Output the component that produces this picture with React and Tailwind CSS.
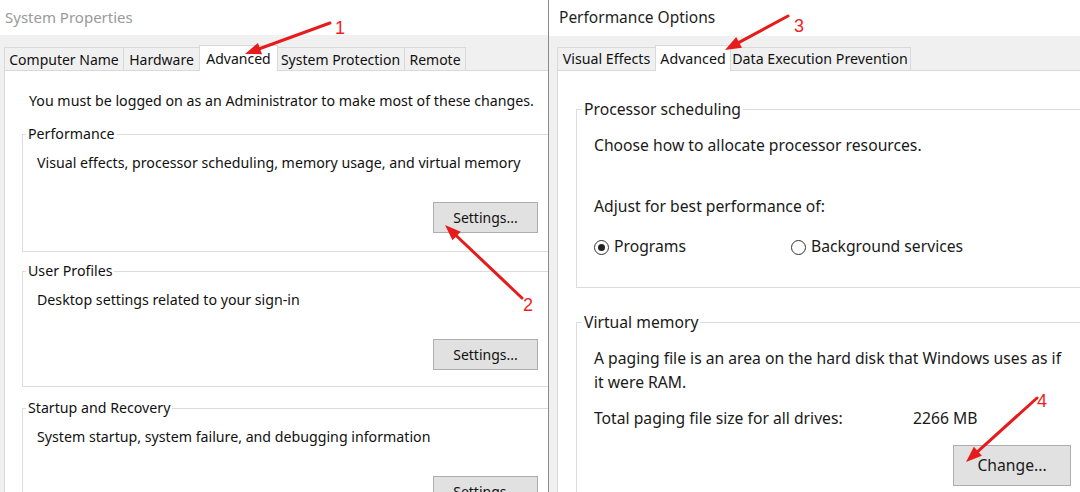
import React from "react";

const leftTabs = [
  { label: "Computer Name", w: "w-[120px]" },
  { label: "Hardware", w: "w-[77px]" },
  { label: "Advanced", w: "w-[79px]", active: true },
  { label: "System Protection", w: "w-[129px]" },
  { label: "Remote", w: "w-[62px]" },
];

const rightTabs = [
  { label: "Visual Effects", w: "w-[99px]" },
  { label: "Advanced", w: "w-[76px]", active: true },
  { label: "Data Execution Prevention", w: "w-[182px]" },
];

// red annotation arrows drawn over the screenshot
const arrows = [
  { from: [330, 23], to: [245, 54], label: "1", lx: 335, ly: 34 },
  { from: [522, 298], to: [445, 225], label: "2", lx: 523, ly: 311 },
  { from: [788, 16], to: [725, 50], label: "3", lx: 794, ly: 32 },
  { from: [1037, 398], to: [966, 462], label: "4", lx: 1037, ly: 407 },
];

function Tab({ label, w, active }) {
  if (active) {
    return (
      <div
        className={`${w} h-[26px] -ml-px -mr-px bg-white border border-b-0 border-[#d9d9d9] flex items-center justify-center relative z-10`}
      >
        {label}
      </div>
    );
  }
  return (
    <div
      className={`${w} h-[23px] mb-px -ml-px first:ml-0 bg-[#f0f0f0] border border-b-0 border-[#d9d9d9] flex items-center justify-center`}
    >
      {label}
    </div>
  );
}

function Radio({ checked, label }) {
  return (
    <div className="flex items-center gap-[5px]">
      <span className="w-[15px] h-[15px] rounded-full border border-[#333333] bg-white flex items-center justify-center">
        {checked && <span className="w-[7px] h-[7px] rounded-full bg-[#222222]" />}
      </span>
      <span>{label}</span>
    </div>
  );
}

function LeftGroup({ title, text, className }) {
  return (
    <fieldset className={`ml-[17px] w-[560px] border border-[#dcdcdc] ${className}`}>
      <legend className="ml-[3px] px-[2px] leading-[20px]">{title}</legend>
      <div className="pl-[14px] w-[515px]">
        <p className="mt-[9px] leading-[20px]">{text}</p>
        <div className="flex justify-end mt-[29px]">
          <button className="w-[105px] h-[31px] bg-[#e1e1e1] border border-[#adadad] text-[14px]">
            Settings...
          </button>
        </div>
      </div>
    </fieldset>
  );
}

function ArrowHead({ from, to }) {
  const dx = to[0] - from[0];
  const dy = to[1] - from[1];
  const len = Math.hypot(dx, dy);
  const ux = dx / len;
  const uy = dy / len;
  const bx = to[0] - ux * 16;
  const by = to[1] - uy * 16;
  const nx = -uy * 6;
  const ny = ux * 6;
  return (
    <>
      <line x1={from[0]} y1={from[1]} x2={bx} y2={by} stroke="#e61c1c" strokeWidth="3" strokeLinecap="round" />
      <polygon
        points={`${to[0]},${to[1]} ${bx + nx},${by + ny} ${bx - nx},${by - ny}`}
        fill="#e61c1c"
      />
    </>
  );
}

export default function App() {
  return (
    <div className="relative w-[1080px] h-[492px] overflow-hidden bg-white flex font-['Noto_Sans',sans-serif] text-[#111111]">
      {/* System Properties */}
      <div className="w-[548px] shrink-0 flex flex-col overflow-hidden">
        <div className="h-[35px] shrink-0 flex items-center pl-[5px] text-[15px] text-[#9a9a9a]">
          System Properties
        </div>
        <div className="flex-1 bg-[#f0f0f0] pl-[4px] pt-[10px] flex flex-col text-[14.2px]">
          <div className="flex items-end h-[26px] shrink-0 text-[14px]">
            {leftTabs.map((t) => (
              <Tab key={t.label} {...t} />
            ))}
          </div>
          <div className="flex-1 -mt-px w-[600px] bg-white border border-[#d9d9d9] pt-[20px]">
            <p className="pl-[24px] leading-[20px]">
              You must be logged on as an Administrator to make most of these changes.
            </p>
            <LeftGroup
              className="mt-[13px] pb-[18px]"
              title="Performance"
              text="Visual effects, processor scheduling, memory usage, and virtual memory"
            />
            <LeftGroup
              className="mt-[9px] pb-[16px]"
              title="User Profiles"
              text="Desktop settings related to your sign-in"
            />
            <LeftGroup
              className="mt-[11px] pb-[16px]"
              title="Startup and Recovery"
              text="System startup, system failure, and debugging information"
            />
          </div>
        </div>
      </div>

      {/* Performance Options */}
      <div className="flex-1 flex flex-col border-l border-[#8a8a8a] overflow-hidden">
        <div className="h-[36px] shrink-0 flex items-center pl-[10px] text-[15.5px] text-[#1e1e1e]">
          Performance Options
        </div>
        <div className="flex-1 bg-[#f0f0f0] pl-[8px] pt-[9px] flex flex-col">
          <div className="flex items-end h-[26px] shrink-0 text-[14.2px]">
            {rightTabs.map((t) => (
              <Tab key={t.label} {...t} />
            ))}
          </div>
          <div className="flex-1 -mt-px w-[600px] bg-white border border-[#d9d9d9] pt-[27px] text-[15.7px] text-[#1a1a1a]">
            <fieldset className="ml-[18px] w-[560px] border border-[#dcdcdc] pb-[29px]">
              <legend className="ml-[5px] px-[2px] leading-[22px]">Processor scheduling</legend>
              <div className="pl-[17px]">
                <p className="mt-[14px] leading-[22px]">Choose how to allocate processor resources.</p>
                <p className="mt-[39px] leading-[22px]">Adjust for best performance of:</p>
                <div className="mt-[19px] h-[22px] flex items-center">
                  <div className="w-[197px]">
                    <Radio checked label="Programs" />
                  </div>
                  <Radio label="Background services" />
                </div>
              </div>
            </fieldset>

            <fieldset className="mt-[23px] ml-[18px] w-[560px] border border-[#dcdcdc] pb-[20px]">
              <legend className="ml-[5px] px-[2px] leading-[22px]">Virtual memory</legend>
              <div className="pl-[17px]">
                <p className="mt-[13px] leading-[24px]">
                  A paging file is an area on the hard disk that Windows uses as if
                  <br />
                  it were RAM.
                </p>
                <div className="mt-[13px] leading-[22px] flex">
                  <span className="w-[319px]">Total paging file size for all drives:</span>
                  <span>2266 MB</span>
                </div>
                <div className="w-[477px] flex justify-end mt-[16px]">
                  <button className="w-[118px] h-[41px] bg-[#e1e1e1] border border-[#adadad]">
                    Change...
                  </button>
                </div>
              </div>
            </fieldset>
          </div>
        </div>
      </div>

      <svg className="absolute inset-0 z-20 pointer-events-none" width="1080" height="492">
        {arrows.map((a) => (
          <g key={a.label}>
            <ArrowHead from={a.from} to={a.to} />
            <text
              x={a.lx}
              y={a.ly}
              fill="#f01e1e"
              fontSize="18"
              fontFamily="'Liberation Sans', sans-serif"
            >
              {a.label}
            </text>
          </g>
        ))}
      </svg>
    </div>
  );
}
